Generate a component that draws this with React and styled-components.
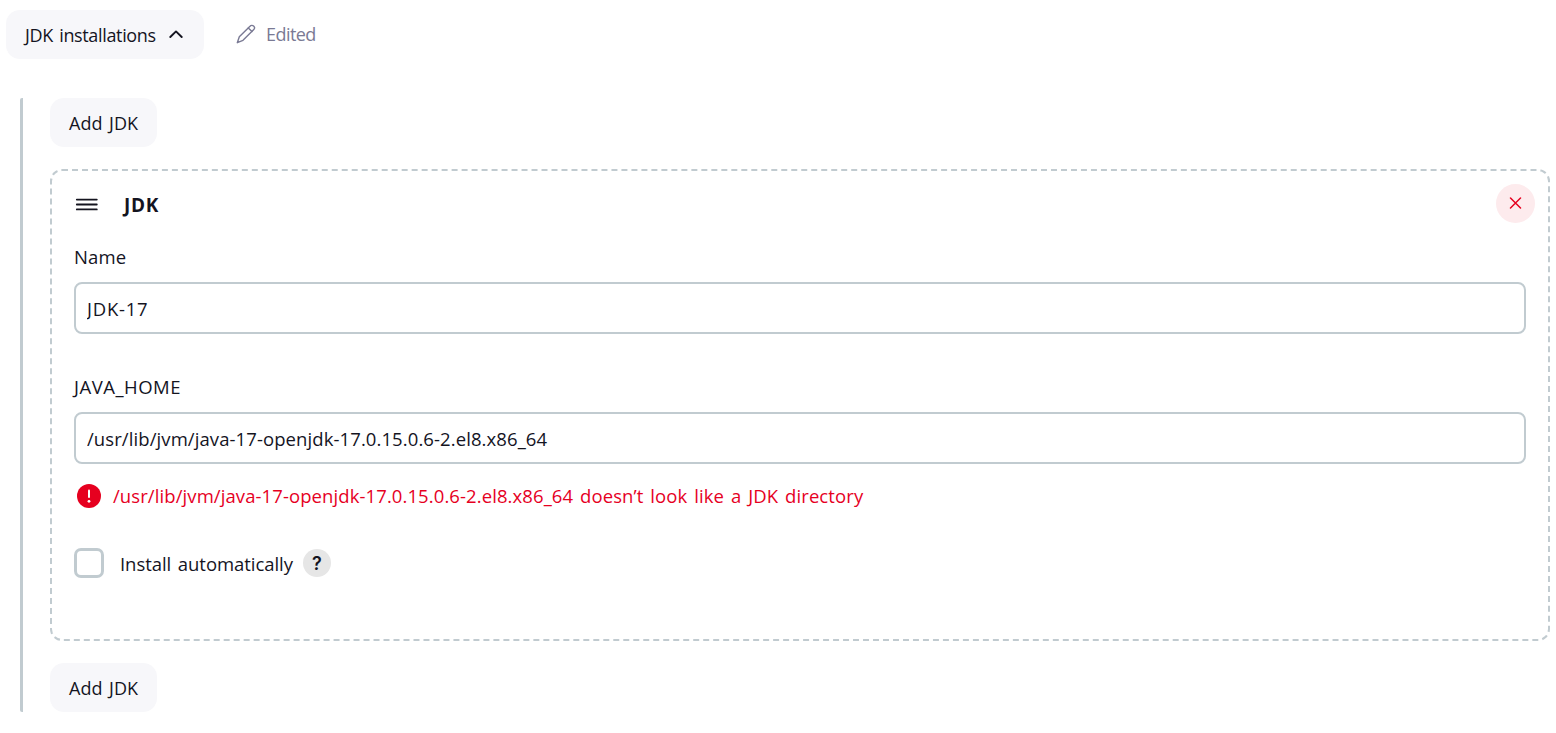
import React, { useState } from "react";
import styled, { createGlobalStyle, ThemeProvider } from "styled-components";

const theme = {
  text: "#14141f",
  muted: "#7a7a94",
  border: "#c1cbd0",
  danger: "#e6001f",
  dangerBg: "#fdebed",
  button: { bgColor: "#f7f7fa" },
  help: { bgColor: "#e6e6e6" }
};

const GlobalStyle = createGlobalStyle`
  *,
  *::before,
  *::after {
    box-sizing: border-box;
  }

  body {
    background-color: #fff;
    color: ${props => props.theme.text};
    font-family: "Open Sans", "Noto Sans", sans-serif;
    font-size: 18.5px;
    line-height: 26px;
    margin: 0;
  }

  button,
  input {
    color: inherit;
    font: inherit;
  }
`;

const Page = styled.main`
  padding: 10px 6px 0;
`;

const Toolbar = styled.div`
  align-items: center;
  display: flex;
  gap: 32px;
  height: 49px;
`;

const Button = styled.button`
  align-items: center;
  background-color: ${props => props.theme.button.bgColor};
  border: 0;
  border-radius: 14px;
  display: flex;
  flex: none;
  font-size: 18px;
  gap: 13px;
  height: 49px;
  letter-spacing: ${props => props.$tracking || "0"};
  padding: 0 19px;
  white-space: nowrap;
  width: ${props => props.$width};
  word-spacing: 2px;
`;

const Edited = styled.span`
  align-items: center;
  color: ${props => props.theme.muted};
  display: flex;
  font-size: 18px;
  gap: 10px;
  height: 26px;
  letter-spacing: -0.55px;
  margin-top: -2px;
`;

const Section = styled.section`
  align-items: flex-start;
  border-left: 3px solid ${props => props.theme.border};
  border-radius: 2px;
  display: flex;
  flex-direction: column;
  gap: 22px;
  margin: 39px 0 0 14px;
  padding-left: 27px;
`;

const Card = styled.div`
  border: 2px dashed ${props => props.theme.border};
  border-radius: 12px;
  height: 472px;
  padding: 13px 22px 0;
  width: 1500px;
`;

const CardHeader = styled.header`
  align-items: center;
  display: flex;
  height: 39px;
  margin-right: -9px;
`;

const Title = styled.h3`
  flex: 1;
  font-size: 19px;
  font-weight: 700;
  letter-spacing: 0.7px;
  margin: 2px 0 0 26px;
`;

const CloseButton = styled.button`
  align-items: center;
  background-color: ${props => props.theme.dangerBg};
  border: 0;
  border-radius: 50%;
  color: ${props => props.theme.danger};
  display: flex;
  height: 39px;
  justify-content: center;
  padding: 0;
  width: 39px;
`;

const Field = styled.div`
  margin-top: ${props => props.$gap};
`;

const Label = styled.label`
  display: block;
  letter-spacing: ${props => props.$tracking || "0"};
  margin-bottom: 12px;
`;

const Input = styled.input`
  background-color: #fff;
  border: 2px solid ${props => props.theme.border};
  border-radius: 8px;
  display: block;
  height: 52px;
  letter-spacing: ${props => props.$tracking || "0"};
  outline: 0;
  padding: 0 11px;
  width: 100%;
`;

const ErrorMessage = styled.div`
  align-items: center;
  color: ${props => props.theme.danger};
  display: flex;
  gap: 12px;
  height: 26px;
  letter-spacing: 0.09px;
  margin: 19px 0 0 3px;
  word-spacing: 2px;
`;

const CheckRow = styled.div`
  align-items: center;
  display: flex;
  height: 30px;
  margin-top: 39px;
`;

const Checkbox = styled.input.attrs({ type: "checkbox" })`
  appearance: none;
  border: 3px solid ${props => props.theme.border};
  border-radius: 7px;
  height: 30px;
  margin: 0 16px 0 0;
  width: 30px;

  &:checked {
    background-color: ${props => props.theme.text};
  }
`;

const CheckLabel = styled.label`
  letter-spacing: -0.06px;
  padding-top: 2px;
  width: 183px;
  word-spacing: 2px;
`;

const Help = styled.button`
  background-color: ${props => props.theme.help.bgColor};
  border: 0;
  border-radius: 50%;
  font-family: Inter, sans-serif;
  font-size: 18px;
  font-weight: 600;
  height: 28px;
  line-height: 28px;
  padding: 1px 0 0;
  width: 28px;
`;

const ChevronIcon = () => (
  <svg width="14" height="9" viewBox="0 0 14 9" fill="none">
    <path
      d="M1.3 7 7 1.4 12.7 7"
      stroke="currentColor"
      strokeWidth="1.9"
      strokeLinecap="round"
      strokeLinejoin="round"
    />
  </svg>
);

const PencilIcon = () => (
  <svg width="20" height="20" viewBox="0 0 20 20" fill="none">
    <g
      stroke="currentColor"
      strokeWidth="1.4"
      strokeLinecap="round"
      strokeLinejoin="round"
    >
      <path d="M14 2.2a2.4 2.4 0 0 1 3.8 3.4L7 16.3 1.3 18.7l2-5.9Z" />
      <path d="m12.3 3.9 3.7 3.6" />
    </g>
  </svg>
);

const DragIcon = () => (
  <svg width="24" height="14" viewBox="0 0 24 14" fill="none">
    <path
      d="M2.8 2.6h20M2.8 7.5h20M2.8 12.4h20"
      stroke="currentColor"
      strokeWidth="1.8"
      strokeLinecap="round"
    />
  </svg>
);

const CloseIcon = () => (
  <svg width="13" height="13" viewBox="0 0 13 13" fill="none">
    <path
      d="m1.5 1 10 10M11.5 1l-10 10"
      stroke="currentColor"
      strokeWidth="1.5"
      strokeLinecap="round"
    />
  </svg>
);

const ErrorIcon = () => (
  <svg width="24" height="24" viewBox="0 0 24 24" fill="none">
    <circle cx="12" cy="12" r="12" fill="currentColor" />
    <path d="M12 6.5v6.5" stroke="#fff" strokeWidth="2" strokeLinecap="round" />
    <circle cx="12" cy="17.3" r="1.4" fill="#fff" />
  </svg>
);

const App = () => {
  const [isChecked, setChecked] = useState(false);

  return (
    <ThemeProvider theme={theme}>
      <GlobalStyle />
      <Page>
        <Toolbar>
          <Button $tracking="-0.35px" $width="198px">
            JDK installations
            <ChevronIcon />
          </Button>
          <Edited>
            <PencilIcon />
            Edited
          </Edited>
        </Toolbar>
        <Section>
          <Button $width="107px">Add JDK</Button>
          <Card>
            <CardHeader>
              <DragIcon />
              <Title>JDK</Title>
              <CloseButton aria-label="Delete">
                <CloseIcon />
              </CloseButton>
            </CardHeader>
            <Field $gap="21px">
              <Label htmlFor="name" $tracking="0.1px">
                Name
              </Label>
              <Input id="name" $tracking="0.75px" defaultValue="JDK-17" />
            </Field>
            <Field $gap="40px">
              <Label htmlFor="home" $tracking="0.5px">
                JAVA_HOME
              </Label>
              <Input
                id="home"
                $tracking="0.09px"
                defaultValue="/usr/lib/jvm/java-17-openjdk-17.0.15.0.6-2.el8.x86_64"
              />
            </Field>
            <ErrorMessage>
              <ErrorIcon />
              /usr/lib/jvm/java-17-openjdk-17.0.15.0.6-2.el8.x86_64 doesn’t look
              like a JDK directory
            </ErrorMessage>
            <CheckRow>
              <Checkbox
                id="auto"
                checked={isChecked}
                onChange={() => setChecked(!isChecked)}
              />
              <CheckLabel htmlFor="auto">Install automatically</CheckLabel>
              <Help>?</Help>
            </CheckRow>
          </Card>
          <Button $width="107px">Add JDK</Button>
        </Section>
      </Page>
    </ThemeProvider>
  );
};

export default App;
